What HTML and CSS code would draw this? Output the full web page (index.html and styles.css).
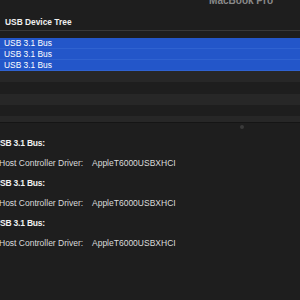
FILE: index.html
```html
<!DOCTYPE html>
<html lang="en">
<head>
    <meta charset="UTF-8">
    <title>System Information - USB</title>
    <link rel="stylesheet" href="styles.css">
</head>
<body>
    <div class="window">
        <!-- タイトルバー（上端で切れている） -->
        <div class="titlebar">
            <span class="window-title">MacBook Pro</span>
        </div>

        <div class="tree-header">USB Device Tree</div>

        <div class="tree-list">
            <div class="row selected">USB 3.1 Bus</div>
            <div class="row selected">USB 3.1 Bus</div>
            <div class="row selected">USB 3.1 Bus</div>
            <div class="row stripe"></div>
            <div class="row plain tall"></div>
            <div class="row stripe"></div>
            <div class="row plain"></div>
            <div class="row stripe short"></div>
        </div>

        <div class="splitter">
            <span class="splitter-dot"></span>
        </div>

        <div class="details">
            <div class="bus-title">USB 3.1 Bus:</div>
            <div class="prop"><span class="prop-name">Host Controller Driver:</span><span class="prop-value">AppleT6000USBXHCI</span></div>
            <div class="bus-title">USB 3.1 Bus:</div>
            <div class="prop"><span class="prop-name">Host Controller Driver:</span><span class="prop-value">AppleT6000USBXHCI</span></div>
            <div class="bus-title">USB 3.1 Bus:</div>
            <div class="prop"><span class="prop-name">Host Controller Driver:</span><span class="prop-value">AppleT6000USBXHCI</span></div>
        </div>
    </div>
</body>
</html>
```

FILE: styles.css
```css
body {
    margin: 0;
    background-color: #1e1e1e;
    font-family: 'Liberation Sans', Arial, sans-serif;
    color: #dedede;
}

.window {
    width: 300px;
    height: 300px;
    overflow: hidden;
    background-color: #1e1e1e;
}

.titlebar {
    height: 4px;
    overflow: hidden;
    display: flex;
    justify-content: flex-end;
    padding-right: 27px;
}

.window-title {
    font-size: 10px;
    line-height: 10px;
    font-weight: bold;
    color: #8a8a8a;
    margin-top: -4px;
}

.tree-header {
    height: 27px;
    box-sizing: border-box;
    padding: 13px 0 0 5px;
    font-size: 8.4px;
    line-height: 10px;
    font-weight: bold;
    color: #f0f0f0;
    border-bottom: 1px solid #383838;
}

.tree-list {
    padding-top: 7px;
}

.row {
    height: 11px;
    box-sizing: border-box;
    font-size: 8.4px;
    line-height: 11px;
    padding-left: 4px;
}

.row.selected {
    background-color: #2356c9;
    color: #ffffff;
    border-bottom: 1px solid #2f62d0;
}

.row.selected:last-of-type {
    border-bottom: none;
}

.row.stripe {
    background-color: #272727;
}

.row.plain {
    background-color: #1e1e1e;
}

.row.tall {
    height: 12px;
}

.row.short {
    height: 6px;
}

.splitter {
    height: 11px;
    border-top: 1px solid #151515;
    display: flex;
    justify-content: flex-end;
    padding-right: 56px;
    padding-top: 2px;
    box-sizing: border-box;
}

.splitter-dot {
    width: 4px;
    height: 4px;
    border-radius: 50%;
    background-color: #3a3a3a;
}

.details {
    font-size: 8.5px;
    line-height: 20px;
    margin-left: -6px;
}

.bus-title {
    font-weight: bold;
    color: #f2f2f2;
    letter-spacing: -0.2px;
}

.prop {
    display: flex;
    padding-left: 5px;
    color: #dcdcdc;
}

.prop-name {
    width: 93px;
}
```
